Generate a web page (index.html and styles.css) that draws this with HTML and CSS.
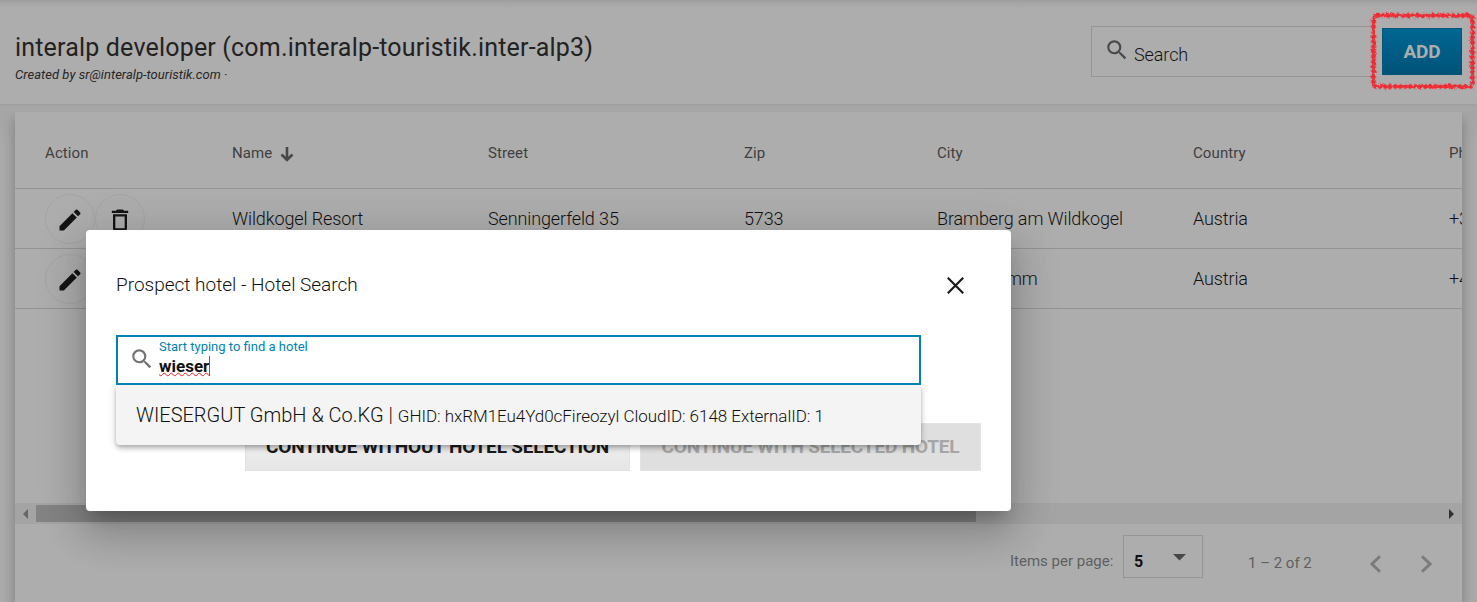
FILE: index.html
```html
<!DOCTYPE html>
<html lang="en">
<head>
<meta charset="utf-8">
<title>interalp developer</title>
<link rel="stylesheet" href="styles.css">
</head>
<body>
<svg class="defs" width="0" height="0">
  <symbol id="search" viewBox="0 0 24 24"><path d="M15.5 14h-.79l-.28-.27A6.47 6.47 0 0 0 16 9.5 6.5 6.5 0 1 0 9.5 16c1.61 0 3.09-.59 4.23-1.57l.27.28v.79l5 4.99L20.49 19l-4.99-5zm-6 0C7.01 14 5 11.99 5 9.5S7.01 5 9.5 5 14 7.01 14 9.5 11.99 14 9.5 14z"/></symbol>
  <symbol id="edit" viewBox="0 0 24 24"><path d="M3 17.25V21h3.75L17.81 9.94l-3.75-3.75L3 17.25zM20.71 7.04a1 1 0 0 0 0-1.41l-2.34-2.34a1 1 0 0 0-1.41 0l-1.83 1.83 3.75 3.75 1.83-1.83z"/></symbol>
  <symbol id="trash" viewBox="0 0 24 24"><path d="M6 19c0 1.100.9 2 2 2h8c1.100 0 2-.9 2-2V7H6v12zM8 9h8v10H8V9zm7.500-5l-1-1h-5l-1 1H5v2h14V4z"/></symbol>
</svg>
<div class="page">
  <header class="header">
    <div class="heading">
      <h1 class="title">interalp developer (com.interalp-touristik.inter-alp3)</h1>
      <p class="subtitle">Created by sr@interalp-touristik.com ·</p>
    </div>
    <div class="search"><svg class="search-icon"><use href="#search"/></svg><span class="search-label">Search</span></div>
    <button class="add">ADD</button>
    <svg class="marker" width="110" height="84" viewBox="0 0 110 84">
      <filter id="rough" x="-10%" y="-10%" width="120%" height="120%">
        <feTurbulence type="fractalNoise" baseFrequency=".3" numOctaves="2" seed="4" result="n"/>
        <feDisplacementMap in="SourceGraphic" in2="n" scale="4"/>
      </filter>
      <g filter="url(#rough)" fill="none" stroke="#f5222a">
        <rect x="5.500" y="6.500" width="99" height="71" rx="3" stroke-width="3.200" opacity=".8"/>
        <rect x="5.500" y="6.500" width="99" height="71" rx="3" stroke-width="5.500" stroke-dasharray="3 2" opacity=".6"/>
      </g>
    </svg>
  </header>
  <main class="card">
    <div class="row row-head">
      <span>Action</span>
      <span class="sorted">Name <svg class="arrow" viewBox="0 0 14 16"><path d="M7 0v13M1.500 7.500L7 13l5.500-5.500" fill="none" stroke="#484848" stroke-width="2.600"/></svg></span>
      <span>Street</span><span>Zip</span><span>City</span><span>Country</span><span>Phone</span>
    </div>
    <div class="row">
      <span class="actions"><i class="round"><svg><use href="#edit"/></svg></i><i class="round"><svg><use href="#trash"/></svg></i></span>
      <span>Wildkogel Resort</span><span>Senningerfeld 35</span><span>5733</span><span>Bramberg am Wildkogel</span><span>Austria</span><span>+3</span>
    </div>
    <div class="row">
      <span class="actions"><i class="round"><svg><use href="#edit"/></svg></i></span>
      <span></span><span></span><span></span><span class="clipped-city">mm</span><span>Austria</span><span>+4</span>
    </div>
    <div class="space"></div>
    <div class="scrollbar">
      <svg class="sb-left" viewBox="0 0 5 10"><path d="M5 0v10L0 5z" fill="#666"/></svg>
      <div class="thumb"></div>
      <svg class="sb-right" viewBox="0 0 5 10"><path d="M0 0v10l5-5z" fill="#303030"/></svg>
    </div>
    <footer class="pager">
      <span class="per-page">Items per page:</span>
      <div class="select"><b>5</b><svg width="13" height="7"><path d="M0 0h13L6.500 6.500z" fill="#484848"/></svg></div>
      <span class="range">1 – 2 of 2</span>
      <svg class="chev prev" viewBox="0 0 11 18"><path d="M10 1.200L2 9l8 7.800"/></svg>
      <svg class="chev next" viewBox="0 0 11 18"><path d="M1 1.200L9 9l-8 7.800"/></svg>
    </footer>
  </main>
</div>
<section class="dialog">
  <div class="dialog-head">
    <h2 class="dialog-title">Prospect hotel - Hotel Search</h2>
    <svg class="close" width="17" height="17"><path d="M.8.800l15.400 15.400M16.200.8L.8 16.200" stroke="#1b1b1b" stroke-width="2.200"/></svg>
  </div>
  <div class="field">
    <svg class="field-icon"><use href="#search"/></svg>
    <div class="field-text">
      <label class="field-label">Start typing to find a hotel</label>
      <div class="field-value"><span class="typed">wieser</span></div>
    </div>
    <div class="options"><div class="option"><span class="hotel">WIESERGUT GmbH &amp; Co.KG |</span> <span class="ids">GHID: hxRM1Eu4Yd0cFireozyl CloudID: 6148 ExternalID: 1</span></div></div>
  </div>
  <div class="dialog-actions">
    <button class="btn">CONTINUE WITHOUT HOTEL SELECTION</button>
    <button class="btn btn-disabled">CONTINUE WITH SELECTED HOTEL</button>
  </div>
</section>
</body>
</html>
```

FILE: styles.css
```css
* { box-sizing: border-box; }
body { margin: 0; width: 1477px; height: 602px; overflow: hidden; position: relative; background: linear-gradient(#a6a6a6 114px, #ababab 150px); font-family: Roboto, "Liberation Sans", sans-serif; color: #111; }
button { font-family: inherit; }
h1, h2, p { margin: 0; font-weight: 400; }
.defs { position: absolute; }
.page { display: flex; flex-direction: column; height: 602px; }
.header { position: relative; display: flex; height: 104px; flex: none; align-items: flex-start; padding: 26px 15px 0; background: linear-gradient(#9d9d9d, #a8a8a8 4px, #adadad 10px); box-shadow: 0 1px 1px rgba(0,0,0,.04); }
.heading { flex: 1; white-space: nowrap; }
.title { font-size: 25px; line-height: 28px; margin-top: 8px; color: #222; letter-spacing: .18px; }
.subtitle { font-size: 13px; line-height: 16px; margin-top: 5px; font-style: italic; letter-spacing: .04px; color: #262626; }
.search { display: flex; width: 281px; height: 51px; border: 1px solid #959595; border-right: 0; padding-left: 12px; }
.search-icon { width: 26px; height: 26px; margin-top: 10px; fill: #4a4a4a; }
.search-label { margin: 17px 0 0 4px; font-size: 18px; line-height: 22px; font-weight: 300; letter-spacing: -.1px; color: #111; }
.add { width: 80px; height: 47px; margin: 2px 0 0 10px; padding: 0; border: 1px solid #00557a; background: linear-gradient(#006793, #005378); color: #adadad; font-size: 19px; font-weight: 700; letter-spacing: -.1px; }
.marker { position: absolute; left: 1368px; top: 9px; overflow: visible; }
.card { flex: 1; display: flex; flex-direction: column; margin: 8px 15px 0; overflow: hidden; background: #adadad; box-shadow: 0 8px 12px 1px rgba(0,0,0,.25); clip-path: inset(0 -20px 0 -20px); }
.row { display: grid; flex: none; grid-template-columns: 187px 256px 256px 193px 256px 256px 200px; align-items: center; height: 60px; padding-left: 30px; border-bottom: 1px solid #939393; font-size: 18px; font-weight: 300; letter-spacing: -.12px; white-space: nowrap; }
.row-head { height: 77px; padding-top: 6px; font-size: 15px; font-weight: 400; color: #404040; letter-spacing: .1px; }
.sorted { display: flex; align-items: center; gap: 8px; }
.arrow { width: 14px; height: 16px; margin-top: 3px; }
.actions { display: flex; gap: 0; }
.round { display: grid; place-items: center; width: 50px; height: 50px; border: 1px solid #a4a4a4; border-radius: 50%; }
.round svg { width: 28px; height: 28px; fill: #141414; margin-top: 3px; }
.clipped-city { padding-left: 69px; }
.space { flex: 1; }
.scrollbar { display: flex; align-items: center; flex: none; height: 21px; padding: 0 8px; background: #a4a4a4; }
.thumb { width: 940px; height: 17px; margin-left: 8px; background: #838383; }
.sb-left, .sb-right { width: 5px; height: 10px; }
.sb-right { margin-left: auto; }
.pager { display: flex; align-items: center; flex: none; height: 78px; padding-bottom: 14px; font-size: 15px; color: #606060; white-space: nowrap; }
.per-page { width: 103px; margin: 10px 10px 0 995px; font-weight: 400; }
.select { display: flex; justify-content: space-between; width: 80px; height: 43px; padding: 16px 16px 0 10px; border: 1px solid #959595; font-size: 16px; color: #101010; }
.select b { line-height: 19px; }
.select svg { margin-top: 2px; }
.range { width: 65px; margin: 13px 0 0 45px; }
.chev { width: 11px; height: 18px; fill: none; stroke: #7b7b7b; stroke-width: 3; margin-top: 16px; }
.prev { margin-left: 57px; }
.next { margin-left: 40px; }
.dialog { position: absolute; left: 86px; top: 230px; width: 925px; height: 281px; padding: 43px 30px 0; border-radius: 4px; background: #fff; box-shadow: 0 11px 15px -7px rgba(0,0,0,.2), 0 24px 38px 3px rgba(0,0,0,.14), 0 9px 46px 8px rgba(0,0,0,.12); }
.dialog-head { display: flex; justify-content: space-between; height: 62px; padding-right: 17px; }
.dialog-title { font-size: 19px; line-height: 24px; font-weight: 300; }
.close { margin-top: 4px; }
.field { position: relative; display: flex; width: 805px; height: 50px; border: 2px solid #0082b4; padding-left: 11px; }
.field-icon { width: 26px; height: 26px; margin-top: 9px; fill: #737373; }
.field-text { margin-left: 4px; }
.field-label { display: block; margin-top: 1px; font-size: 13px; line-height: 17px; color: #0082b4; }
.field-value { font-size: 17px; line-height: 22px; font-weight: 700; }
.typed { border-right: 1px solid #0082b4; text-decoration: underline wavy #ed1c24 1px; text-underline-offset: 0; text-decoration-skip-ink: none; }
.options { position: absolute; left: -2px; top: 48px; width: 805px; height: 60px; background: #f4f4f4; border-radius: 0 0 4px 4px; box-shadow: 0 2px 4px -1px rgba(0,0,0,.2), 0 4px 5px rgba(0,0,0,.14), 0 1px 10px rgba(0,0,0,.12); clip-path: inset(0 -20px -20px -20px); }
.option { display: flex; align-items: baseline; gap: 5px; padding: 18px 20px 0; line-height: 24px; font-weight: 300; white-space: nowrap; }
.hotel { font-size: 20px; }
.ids { font-size: 17px; letter-spacing: -.04px; }
.dialog-actions { display: flex; justify-content: flex-end; gap: 10px; margin-top: 38px; }
.btn { width: 385px; height: 48px; padding: 0 0 2px; border: 1px solid #e3e3e3; background: linear-gradient(#f4f4f4, #e6e6e6); font-size: 19px; font-weight: 700; letter-spacing: -.18px; color: #1b1b1b; white-space: nowrap; }
.btn-disabled { width: 341px; background: #dfdfdf; color: #a6a6a6; }
```
